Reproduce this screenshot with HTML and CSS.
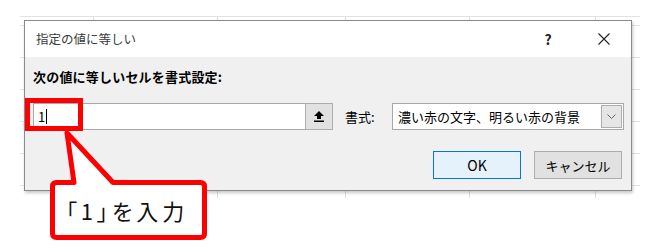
FILE: index.html
```html
<!DOCTYPE html>
<html lang="ja">
<head>
  <meta charset="UTF-8" />
  <title>指定の値に等しい</title>
  <link rel="stylesheet" href="styles.css">
</head>
<body>
  <div class="page">
    <div class="sheet">
      <div class="dialog">
        <div class="titlebar">
          <span class="title">指定の値に等しい</span>
          <span class="help">?</span>
          <span class="close">
            <svg width="12" height="12" viewBox="0 0 12 12"><path d="M0.5 0.5 L11.5 11.5 M11.5 0.5 L0.5 11.5" stroke="#222" stroke-width="1.1" fill="none"/></svg>
          </span>
        </div>

        <div class="body">
          <div class="prompt">次の値に等しいセルを書式設定:</div>

          <div class="row">
            <div class="ref">
              <div class="ref-input">1<span class="caret"></span></div>
              <div class="ref-btn">
                <svg width="10" height="11" viewBox="0 0 10 11"><path d="M5 0 L10 5 L7 5 L7 8 L3 8 L3 5 L0 5 Z" fill="#000"/><rect x="0" y="9.5" width="10" height="1.5" fill="#000"/></svg>
              </div>
            </div>
            <span class="fmt-label">書式:</span>
            <div class="combo">
              <span class="combo-text">濃い赤の文字、明るい赤の背景</span>
              <span class="combo-btn">
                <svg width="9" height="5" viewBox="0 0 9 5"><path d="M0.5 0.5 L4.5 4.5 L8.5 0.5" stroke="#666" stroke-width="1" fill="none"/></svg>
              </span>
            </div>
          </div>

          <div class="actions">
            <div class="btn ok">OK</div>
            <div class="btn">キャンセル</div>
          </div>
        </div>
      </div>
    </div>

    <!-- 注釈 -->
    <svg class="annot" width="664" height="252" viewBox="0 0 664 252">
      <rect x="27.5" y="100.5" width="53" height="28" fill="none" stroke="#ff0000" stroke-width="5"/>
      <path d="M56.5 182.5 L74 182.5 L67 133 L113 182.5 L200.5 182.5 Q204.5 182.5 204.5 186.5 L204.5 233.5 Q204.5 237.5 200.5 237.5 L56.5 237.5 Q52.5 237.5 52.5 233.5 L52.5 186.5 Q52.5 182.5 56.5 182.5 Z"
            fill="#fff" stroke="#ff0000" stroke-width="5" stroke-linejoin="round"/>
    </svg>
    <div class="callout-text">「1」を入力</div>
  </div>
</body>
</html>
```

FILE: styles.css
```css
body {
  margin: 0;
  background: #fff;
  font-family: "Noto Sans CJK JP", "Noto Sans", sans-serif;
  color: #000;
}

.page {
  position: relative;
  width: 664px;
  height: 252px;
  overflow: hidden;
}

.sheet {
  margin: 16px 0 0 20px;
  width: 620px;
  height: 182px;
  box-sizing: border-box;
  padding: 3px 0 0 4px;
  border-top: 1px solid #e2e2e2;
  background-image:
    linear-gradient(to right,
      transparent 73px, #dedede 73px 74px,
      transparent 74px 197px, #dedede 197px 198px,
      transparent 198px 325px, #dedede 325px 326px,
      transparent 326px 449px, #dedede 449px 450px,
      transparent 450px 575px, #dedede 575px 576px,
      transparent 576px),
    repeating-linear-gradient(to bottom,
      transparent 0 8px, #e2e2e2 8px 9px, transparent 9px 32px);
}

.dialog {
  width: 608px;
  height: 171px;
  box-sizing: border-box;
  border: 1px solid #8a8a8a;
  background: #f0f0f0;
  box-shadow: 1px 2px 3px rgba(0,0,0,0.22);
}

.titlebar {
  height: 36px;
  background: #fff;
  display: flex;
  align-items: center;
  padding-right: 4px;
}

.title {
  padding-left: 11px;
  font-size: 12.5px;
  color: #3a3a3a;
  line-height: 16px;
}

.help {
  margin-left: auto;
  width: 20px;
  text-align: center;
  font-size: 14px;
  font-weight: bold;
  color: #222;
  margin-right: 23px;
}

.close {
  width: 46px;
  display: flex;
  justify-content: center;
}

.body {
  padding: 11px 7px 0 8px;
}

.prompt {
  font-size: 13px;
  font-weight: bold;
  line-height: 18px;
  letter-spacing: 0.2px;
}

.row {
  margin-top: 17px;
  display: flex;
  align-items: center;
  height: 27px;
}

.ref {
  display: flex;
  height: 27px;
}

.ref-input {
  width: 272px;
  box-sizing: border-box;
  border: 1px solid #a8a8a8;
  border-right: none;
  background: #fff;
  padding-left: 4px;
  font-size: 13px;
  line-height: 25px;
  display: flex;
  align-items: center;
}

.caret {
  display: inline-block;
  width: 1px;
  height: 15px;
  background: #000;
  margin-left: 1px;
}

.ref-btn {
  width: 28px;
  box-sizing: border-box;
  border: 1px solid #adadad;
  background: #e1e1e1;
  display: flex;
  align-items: center;
  justify-content: center;
}

.fmt-label {
  margin-left: 12px;
  width: 47px;
  font-size: 13px;
  line-height: 18px;
}

.combo {
  width: 232px;
  height: 27px;
  box-sizing: border-box;
  border: 1px solid #a8a8a8;
  background: #fff;
  display: flex;
  align-items: center;
  padding: 1px;
}

.combo-text {
  padding-left: 4px;
  font-size: 13px;
  line-height: 18px;
  flex: 1;
}

.combo-btn {
  width: 21px;
  height: 23px;
  box-sizing: border-box;
  border: 1px solid #adadad;
  background: #e6e6e6;
  display: flex;
  align-items: center;
  justify-content: center;
}

.actions {
  margin-top: 21px;
  display: flex;
  justify-content: flex-end;
  gap: 13px;
  padding-right: 2px;
}

.btn {
  width: 88px;
  height: 28px;
  box-sizing: border-box;
  border: 1px solid #adadad;
  background: #e1e1e1;
  display: flex;
  align-items: center;
  justify-content: center;
  font-size: 13px;
}

.btn.ok {
  border-color: #0078d7;
  background: #e5f1fb;
  font-size: 14px;
}

.annot {
  position: absolute;
  left: 0;
  top: 0;
}

.callout-text {
  position: absolute;
  left: 52px;
  top: 182px;
  width: 150px;
  height: 56px;
  display: flex;
  align-items: center;
  justify-content: center;
  font-size: 22px;
  letter-spacing: 4px;
  font-feature-settings: "palt";
  color: #111;
}
```
